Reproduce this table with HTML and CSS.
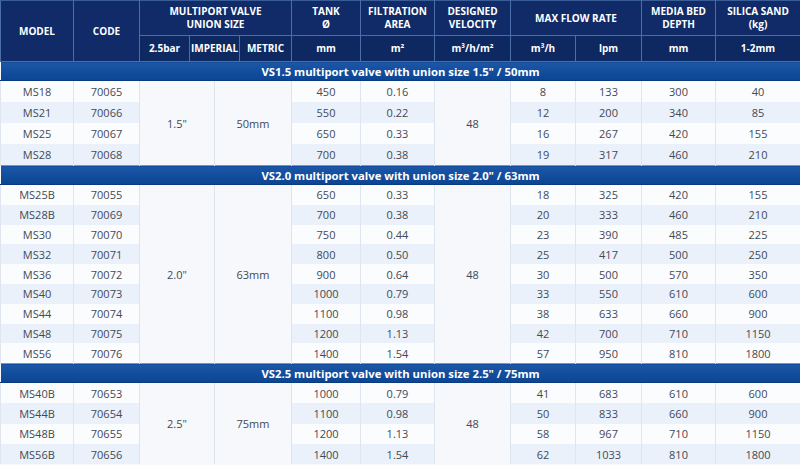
FILE: index.html
```html
<!DOCTYPE html>
<html>
<head>
<meta charset="utf-8">
<link rel="stylesheet" href="styles.css">
</head>
<body>
<table class="spec">
  <colgroup>
    <col class="w73"><col class="w66"><col class="w50"><col class="w25"><col class="w25"><col class="w52"><col class="w69"><col class="w74"><col class="w76"><col class="w65"><col class="w66"><col class="w74"><col class="w85">
  </colgroup>
  <thead>
    <tr class="h-top">
      <th rowspan="2">MODEL</th>
      <th rowspan="2">CODE</th>
      <th colspan="4">MULTIPORT VALVE<br>UNION SIZE</th>
      <th>TANK<br>Ø</th>
      <th>FILTRATION<br>AREA</th>
      <th>DESIGNED<br>VELOCITY</th>
      <th colspan="2">MAX FLOW RATE</th>
      <th>MEDIA BED<br>DEPTH</th>
      <th>SILICA SAND<br>(kg)</th>
    </tr>
    <tr class="h-sub">
      <th>2.5bar</th>
      <th colspan="2">IMPERIAL</th>
      <th>METRIC</th>
      <th>mm</th>
      <th>m²</th>
      <th>m³/h/m²</th>
      <th>m³/h</th>
      <th>lpm</th>
      <th>mm</th>
      <th>1-2mm</th>
    </tr>
  </thead>
  <tbody class="s1">
    <tr class="banner"><td colspan="13">VS1.5 multiport valve with union size 1.5" / 50mm</td></tr>
    <tr class="odd"><td>MS18</td><td>70065</td><td colspan="2" rowspan="4" class="merged">1.5"</td><td colspan="2" rowspan="4" class="merged">50mm</td><td>450</td><td>0.16</td><td rowspan="4" class="merged">48</td><td>8</td><td>133</td><td>300</td><td>40</td></tr>
    <tr class="even"><td>MS21</td><td>70066</td><td>550</td><td>0.22</td><td>12</td><td>200</td><td>340</td><td>85</td></tr>
    <tr class="odd"><td>MS25</td><td>70067</td><td>650</td><td>0.33</td><td>16</td><td>267</td><td>420</td><td>155</td></tr>
    <tr class="even"><td>MS28</td><td>70068</td><td>700</td><td>0.38</td><td>19</td><td>317</td><td>460</td><td>210</td></tr>
  </tbody>
  <tbody class="s2">
    <tr class="banner"><td colspan="13">VS2.0 multiport valve with union size 2.0" / 63mm</td></tr>
    <tr class="odd"><td>MS25B</td><td>70055</td><td colspan="2" rowspan="9" class="merged">2.0"</td><td colspan="2" rowspan="9" class="merged">63mm</td><td>650</td><td>0.33</td><td rowspan="9" class="merged">48</td><td>18</td><td>325</td><td>420</td><td>155</td></tr>
    <tr class="even"><td>MS28B</td><td>70069</td><td>700</td><td>0.38</td><td>20</td><td>333</td><td>460</td><td>210</td></tr>
    <tr class="odd"><td>MS30</td><td>70070</td><td>750</td><td>0.44</td><td>23</td><td>390</td><td>485</td><td>225</td></tr>
    <tr class="even"><td>MS32</td><td>70071</td><td>800</td><td>0.50</td><td>25</td><td>417</td><td>500</td><td>250</td></tr>
    <tr class="odd"><td>MS36</td><td>70072</td><td>900</td><td>0.64</td><td>30</td><td>500</td><td>570</td><td>350</td></tr>
    <tr class="even"><td>MS40</td><td>70073</td><td>1000</td><td>0.79</td><td>33</td><td>550</td><td>610</td><td>600</td></tr>
    <tr class="odd"><td>MS44</td><td>70074</td><td>1100</td><td>0.98</td><td>38</td><td>633</td><td>660</td><td>900</td></tr>
    <tr class="even"><td>MS48</td><td>70075</td><td>1200</td><td>1.13</td><td>42</td><td>700</td><td>710</td><td>1150</td></tr>
    <tr class="odd"><td>MS56</td><td>70076</td><td>1400</td><td>1.54</td><td>57</td><td>950</td><td>810</td><td>1800</td></tr>
  </tbody>
  <tbody class="s3">
    <tr class="banner"><td colspan="13">VS2.5 multiport valve with union size 2.5" / 75mm</td></tr>
    <tr class="odd"><td>MS40B</td><td>70653</td><td colspan="2" rowspan="4" class="merged">2.5"</td><td colspan="2" rowspan="4" class="merged">75mm</td><td>1000</td><td>0.79</td><td rowspan="4" class="merged">48</td><td>41</td><td>683</td><td>610</td><td>600</td></tr>
    <tr class="even"><td>MS44B</td><td>70654</td><td>1100</td><td>0.98</td><td>50</td><td>833</td><td>660</td><td>900</td></tr>
    <tr class="odd"><td>MS48B</td><td>70655</td><td>1200</td><td>1.13</td><td>58</td><td>967</td><td>710</td><td>1150</td></tr>
    <tr class="even"><td>MS56B</td><td>70656</td><td>1400</td><td>1.54</td><td>62</td><td>1033</td><td>810</td><td>1800</td></tr>
  </tbody>
</table>
</body>
</html>
```

FILE: styles.css
```css
html, body {
  margin: 0;
  padding: 0;
  background: #f7f9fc;
}

.spec {
  width: 800px;
  border-collapse: collapse;
  table-layout: fixed;
  font-family: "Open Sans", "Liberation Sans", sans-serif;
}

.w73 { width: 73px; }
.w66 { width: 66px; }
.w50 { width: 50px; }
.w25 { width: 25px; }
.w52 { width: 52px; }
.w69 { width: 69px; }
.w74 { width: 74px; }
.w76 { width: 76px; }
.w65 { width: 65px; }
.w85 { width: 85px; }

.spec th {
  background: #102b67;
  color: #ffffff;
  font-weight: 700;
  font-size: 10px;
  line-height: 13px;
  padding: 0;
  text-align: center;
  vertical-align: middle;
  border: 1px solid #4b6ea9;
}

.h-top th {
  height: 34px;
  border-top-color: #3a5d98;
}

.h-sub th {
  height: 25px;
  background: #0e2862;
}

.spec td {
  padding: 0;
  text-align: center;
  vertical-align: middle;
  font-size: 11px;
  color: #434955;
  border-left: 1px solid #dfe6f0;
  border-right: 1px solid #dfe6f0;
}

.spec tr.banner td {
  height: 18px;
  background: linear-gradient(#1a57a6, #0b4592);
  color: #ffffff;
  font-weight: 700;
  font-size: 11.3px;
  border-top: 1px solid #6f96cf;
  border-bottom: 1px solid #0a3a80;
  border-left: none;
  border-right: none;
}

.s1 tr.odd td, .s1 tr.even td { height: 21px; }
.s2 tr.odd td, .s2 tr.even td { height: 19.8px; }
.s3 tr.odd td, .s3 tr.even td { height: 20.3px; }

tr.odd td { background: #fbfcfe; }
tr.even td { background: #eaf1fa; }

.spec td.merged {
  background: #f6f8fc;
  border-left: 1px solid #dde4ee;
  border-right: 1px solid #dde4ee;
}
```
